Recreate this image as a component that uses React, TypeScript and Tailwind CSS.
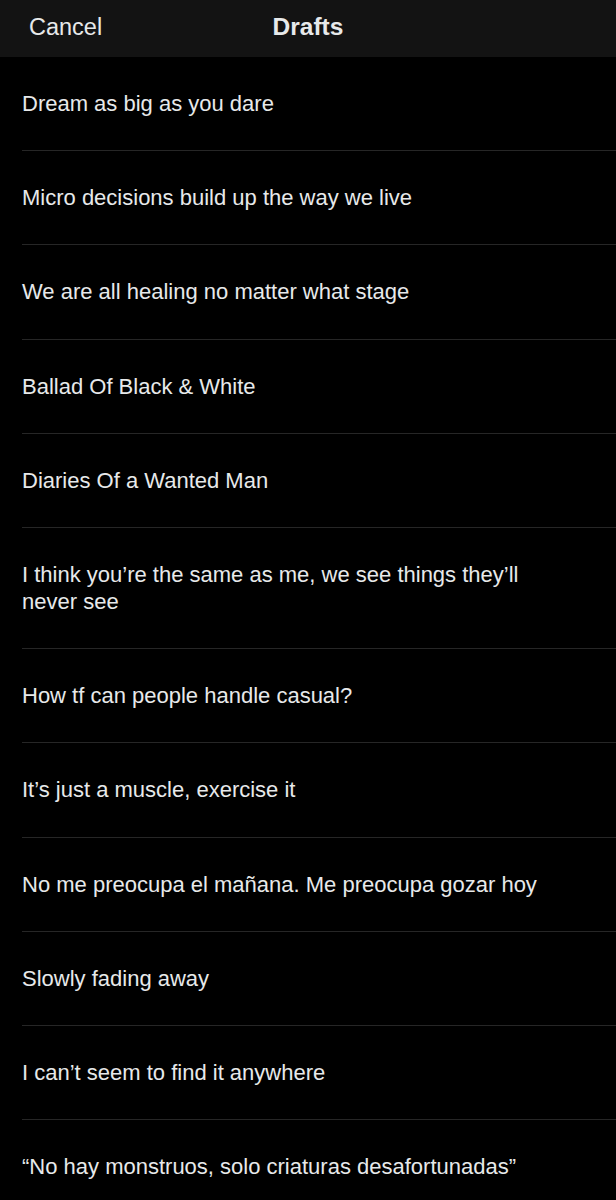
const drafts = [
  "Dream as big as you dare",
  "Micro decisions build up the way we live",
  "We are all healing no matter what stage",
  "Ballad Of Black & White",
  "Diaries Of a Wanted Man",
  "I think you\u2019re the same as me, we see things they\u2019ll\nnever see",
  "How tf can people handle casual?",
  "It\u2019s just a muscle, exercise it",
  "No me preocupa el ma\u00f1ana. Me preocupa gozar hoy",
  "Slowly fading away",
  "I can\u2019t seem to find it anywhere",
  "\u201cNo hay monstruos, solo criaturas desafortunadas\u201d",
];

export default function App() {
  return (
    <div className="w-[616px] h-[1200px] overflow-hidden bg-black text-[#e7e9ea] font-['Liberation_Sans',Arial,sans-serif]">
      {/* header */}
      <div className="relative h-[57px] bg-[#131313] flex items-center">
        <span className="pl-[29px] pb-[2px] text-[23.5px] text-[#e7e9ea]">Cancel</span>
        <span className="absolute left-1/2 -translate-x-1/2 -mt-[2px] text-[24.5px] font-bold">Drafts</span>
      </div>

      {/* list */}
      <div className="flex flex-col">
        {drafts.map((d) => (
          <div key={d} className="ml-[22px] border-b border-[#262626] pt-[33px] pb-[33.2px] pr-[20px]">
            <p className="text-[22px] leading-[27px] whitespace-pre-line">{d}</p>
          </div>
        ))}
      </div>
    </div>
  );
}
